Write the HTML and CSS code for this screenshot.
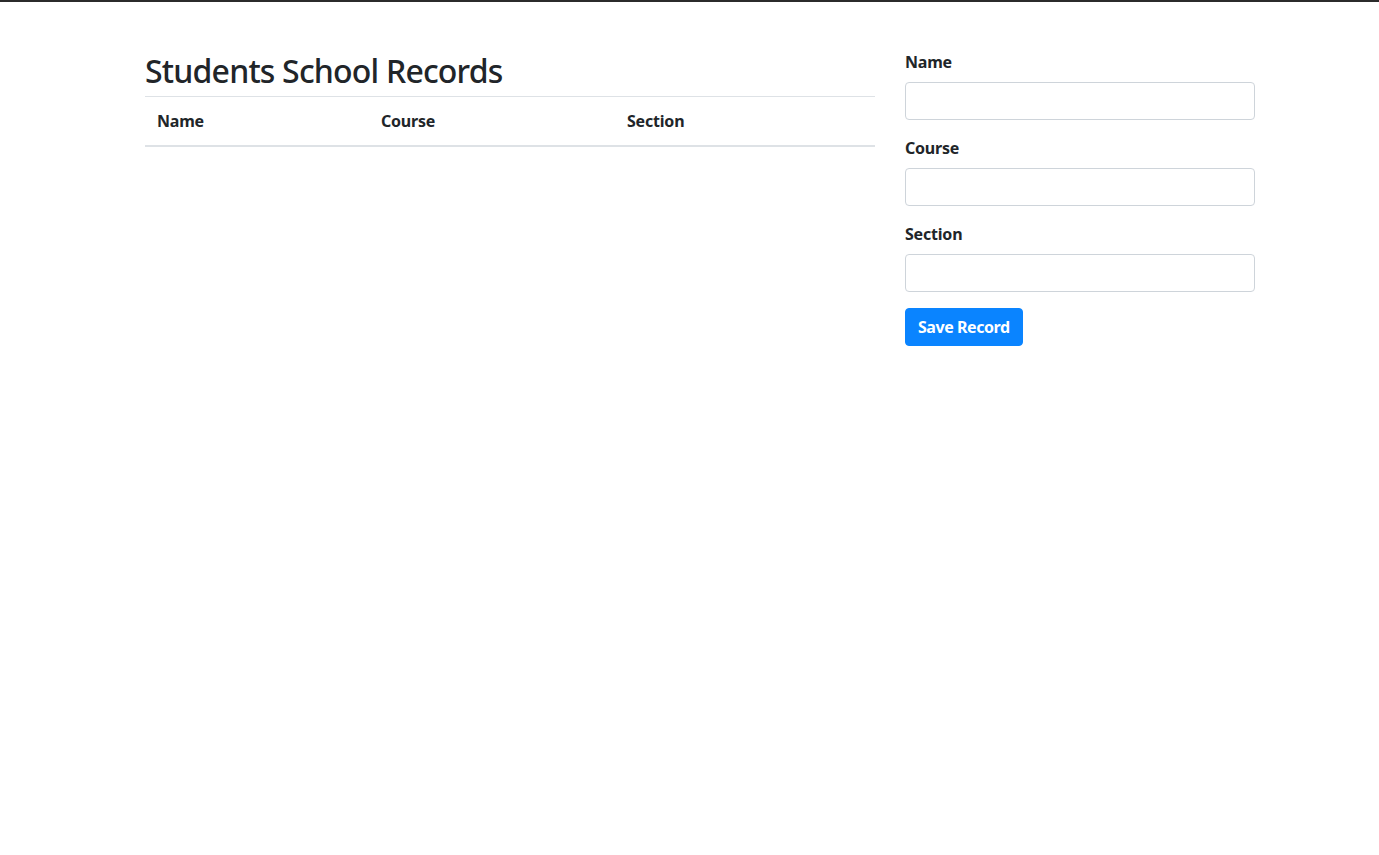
FILE: index.html
```html
<!DOCTYPE html>
<html lang="en">
<head>
<meta charset="utf-8">
<title>Students School Records</title>
<link rel="stylesheet" href="styles.css">
</head>
<body>
<div class="topbar"></div>
<div class="container">
  <div class="col-main">
    <h2 class="title">Students School Records</h2>
    <table class="records">
      <thead>
        <tr>
          <th class="c-name">Name</th>
          <th class="c-course">Course</th>
          <th class="c-section">Section</th>
        </tr>
      </thead>
      <tbody></tbody>
    </table>
  </div>
  <form class="col-side">
    <div class="form-group">
      <label for="name">Name</label>
      <input id="name" class="form-control" type="text">
    </div>
    <div class="form-group">
      <label for="course">Course</label>
      <input id="course" class="form-control" type="text">
    </div>
    <div class="form-group">
      <label for="section">Section</label>
      <input id="section" class="form-control" type="text">
    </div>
    <button type="button" class="btn">Save Record</button>
  </form>
</div>
</body>
</html>
```
FILE: styles.css
```css
* { box-sizing: border-box; }
html, body { margin: 0; padding: 0; background: #fff; }
body {
  font-family: "Noto Sans", "Open Sans", Arial, sans-serif;
  font-size: 16px;
  line-height: 1.5;
  color: #212529;
}
.topbar { height: 2px; background: #2b2b2b; }
.container {
  display: flex;
  gap: 30px;
  padding-top: 48px;
  margin-left: 145px;
  width: 1110px;
}
.col-main { width: 730px; flex: none; }
.col-side { width: 350px; flex: none; }
.title {
  margin: 0 0 8px;
  padding-top: 2px;
  height: 38px;
  font-size: 32px;
  font-weight: 500;
  line-height: 1.2;
  letter-spacing: -0.8px;
}
.records {
  width: 100%;
  border-collapse: collapse;
}
.records th {
  text-align: left;
  font-weight: 700;
  padding: 12px;
  border-top: 1px solid #dee2e6;
  border-bottom: 2px solid #dee2e6;
  line-height: 24px;
  letter-spacing: -0.2px;
}
.c-name { width: 224px; }
.c-course { width: 246px; }
.c-section { width: 260px; }
.form-group { margin-bottom: 16px; }
.form-group label {
  display: block;
  font-weight: 700;
  margin-bottom: 8px;
  letter-spacing: -0.2px;
}
.form-control {
  display: block;
  width: 100%;
  height: 38px;
  padding: 6px 12px;
  font: inherit;
  color: #495057;
  border: 1px solid #ced4da;
  border-radius: 4px;
  background: #fff;
}
.btn {
  display: inline-block;
  height: 38px;
  padding: 6px 12px;
  font: inherit;
  font-weight: 700;
  letter-spacing: -0.45px;
  color: #fff;
  background: #0a84ff;
  border: 1px solid #0a84ff;
  border-radius: 4px;
  cursor: pointer;
}
```
